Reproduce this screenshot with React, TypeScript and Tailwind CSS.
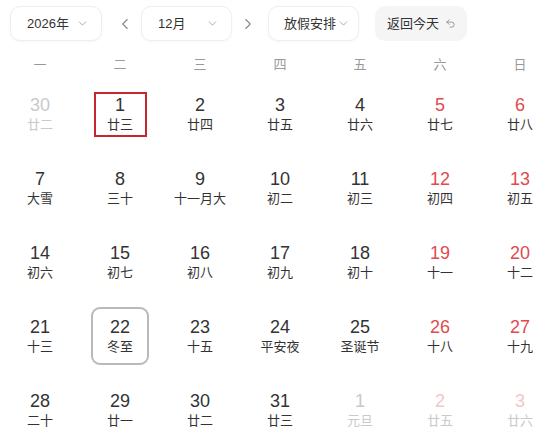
import { ChevronDown, ChevronLeft, ChevronRight, Undo2 } from "lucide-react";

type Day = {
  n: number;
  lunar: string;
  muted?: boolean;
  weekend?: boolean;
  today?: boolean;
  picked?: boolean;
};

const weekdays = ["一", "二", "三", "四", "五", "六", "日"];

const weeks: Day[][] = [
  [
    { n: 30, lunar: "廿二", muted: true },
    { n: 1, lunar: "廿三", today: true },
    { n: 2, lunar: "廿四" },
    { n: 3, lunar: "廿五" },
    { n: 4, lunar: "廿六" },
    { n: 5, lunar: "廿七", weekend: true },
    { n: 6, lunar: "廿八", weekend: true },
  ],
  [
    { n: 7, lunar: "大雪" },
    { n: 8, lunar: "三十" },
    { n: 9, lunar: "十一月大" },
    { n: 10, lunar: "初二" },
    { n: 11, lunar: "初三" },
    { n: 12, lunar: "初四", weekend: true },
    { n: 13, lunar: "初五", weekend: true },
  ],
  [
    { n: 14, lunar: "初六" },
    { n: 15, lunar: "初七" },
    { n: 16, lunar: "初八" },
    { n: 17, lunar: "初九" },
    { n: 18, lunar: "初十" },
    { n: 19, lunar: "十一", weekend: true },
    { n: 20, lunar: "十二", weekend: true },
  ],
  [
    { n: 21, lunar: "十三" },
    { n: 22, lunar: "冬至", picked: true },
    { n: 23, lunar: "十五" },
    { n: 24, lunar: "平安夜" },
    { n: 25, lunar: "圣诞节" },
    { n: 26, lunar: "十八", weekend: true },
    { n: 27, lunar: "十九", weekend: true },
  ],
  [
    { n: 28, lunar: "二十" },
    { n: 29, lunar: "廿一" },
    { n: 30, lunar: "廿二" },
    { n: 31, lunar: "廿三" },
    { n: 1, lunar: "元旦", muted: true },
    { n: 2, lunar: "廿五", muted: true, weekend: true },
    { n: 3, lunar: "廿六", muted: true, weekend: true },
  ],
];

function Select({ label, className }: { label: string; className: string }) {
  return (
    <div
      className={`flex h-[35px] items-center justify-between whitespace-nowrap rounded-[10px] border border-[#efefef] bg-white shadow-[0_1px_3px_rgba(0,0,0,0.04)] ${className}`}
    >
      <span className="text-[13px] text-[#333]">{label}</span>
      <ChevronDown size={13} strokeWidth={1.5} className="shrink-0 text-[#999]" />
    </div>
  );
}

function Cell({ d }: { d: Day }) {
  let numColor = "text-[#333]";
  let subColor = "text-[#333]";
  if (d.weekend) numColor = "text-[#e14a4f]";
  if (d.muted) {
    numColor = d.weekend ? "text-[#f2c6c8]" : "text-[#c9c9c9]";
    subColor = "text-[#c9c9c9]";
  }

  let box = "w-[58px] h-[58px]";
  if (d.today) box = "w-[53px] h-[45px] border-2 border-[#c4272c]";
  if (d.picked) box = "w-[58px] h-[58px] rounded-[9px] border-2 border-[#b9b9b9]";

  return (
    <div className="flex h-[74px] items-center justify-center">
      <div className={`flex flex-col items-center justify-center ${box}`}>
        <span className={`text-[18px] leading-[20px] ${numColor}`}>{d.n}</span>
        <span className={`mt-[1px] text-[13px] leading-[18px] ${subColor}`}>{d.lunar}</span>
      </div>
    </div>
  );
}

export default function App() {
  return (
    <div className="h-[447px] w-[557px] overflow-hidden bg-white font-['Liberation_Sans','Noto_Sans_CJK_SC',sans-serif]">
      <div className="flex items-center pl-[10px] pt-[6px]">
        <Select label="2026年" className="w-[92px] pl-[16px] pr-[12px]" />
        <ChevronLeft size={18} strokeWidth={1.5} className="ml-[14px] text-[#888]" />
        <Select label="12月" className="ml-[7px] w-[91px] pl-[16px] pr-[12px]" />
        <ChevronRight size={18} strokeWidth={1.5} className="ml-[7px] text-[#888]" />
        <Select label="放假安排" className="ml-[11px] w-[91px] pl-[15px] pr-[8px]" />
        <button className="ml-[16px] flex h-[35px] w-[92px] items-center gap-[6px] whitespace-nowrap rounded-[10px] bg-[#f5f5f5] pl-[12px] text-[13px] text-[#333]">
          返回今天
          <Undo2 size={11} strokeWidth={1.8} className="text-[#888]" />
        </button>
      </div>

      <div className="mt-[12px] grid grid-cols-[repeat(7,80px)]">
        {weekdays.map((w) => (
          <div key={w} className="flex h-[24px] items-center justify-center text-[13px] text-[#999]">
            {w}
          </div>
        ))}
      </div>

      <div className="grid grid-cols-[repeat(7,80px)]">
        {weeks.flat().map((d, i) => (
          <Cell key={i} d={d} />
        ))}
      </div>
    </div>
  );
}
